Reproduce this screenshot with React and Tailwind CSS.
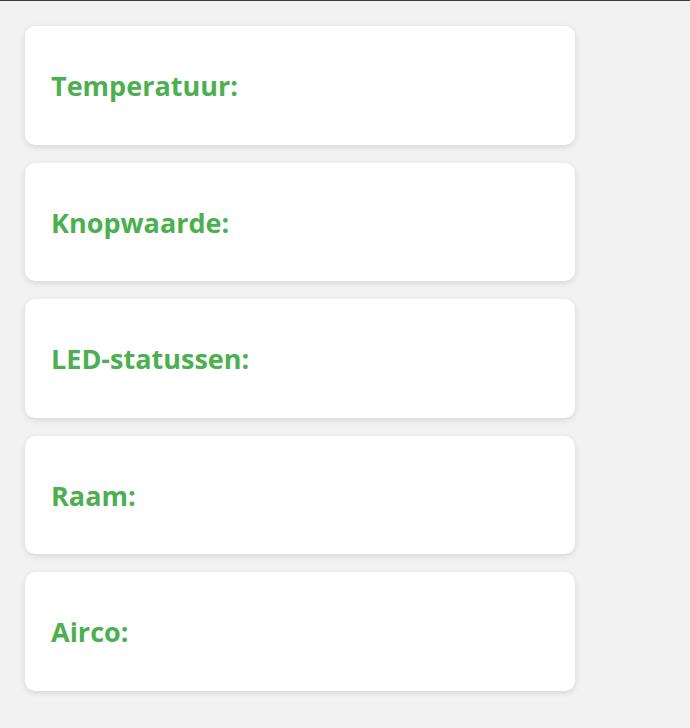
const items = ['Temperatuur:', 'Knopwaarde:', 'LED-statussen:', 'Raam:', 'Airco:']

export default function App() {
  return (
    <div className="min-h-[728px] bg-[#f2f2f2] border-t border-[#3c3c3c] pt-[25px] pl-[25px]">
      <div className="flex flex-col gap-[18px] w-[550px]">
        {items.map((label) => (
          <div
            key={label}
            className="h-[118.5px] bg-white rounded-[10px] shadow-[0_2px_6px_rgba(0,0,0,0.12)] flex items-center px-[26px]"
          >
            <h2 className="text-[27px] leading-none font-bold text-[#4caf50] font-['Open_Sans',sans-serif] pt-[1px]">
              {label}
            </h2>
          </div>
        ))}
      </div>
    </div>
  )
}
